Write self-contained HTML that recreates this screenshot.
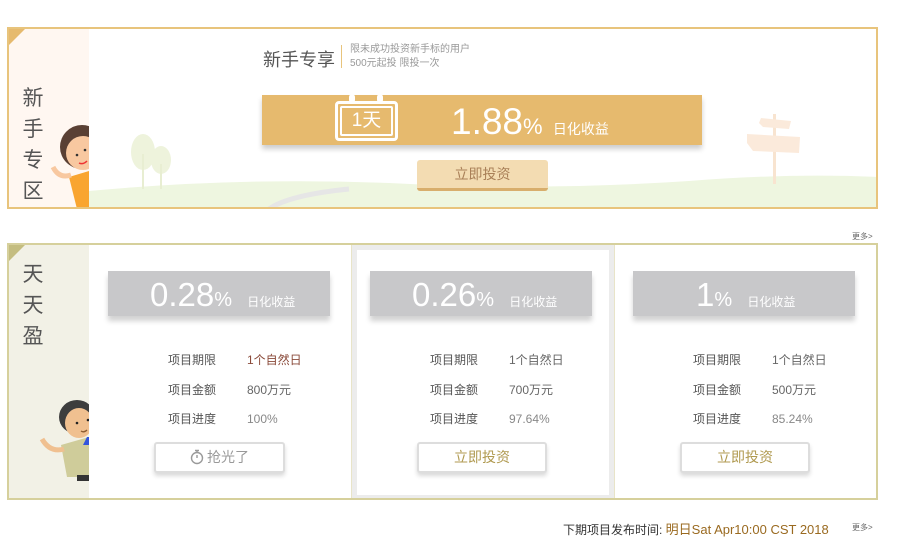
<!DOCTYPE html>
<html><head><meta charset="utf-8"><style>
*{margin:0;padding:0;box-sizing:border-box}
body{width:900px;height:535px;background:#fff;font-family:"Liberation Sans","Noto Sans CJK SC",sans-serif;position:relative;overflow:hidden}
.a{position:absolute}
.vt{font-size:21px;color:#555;line-height:31px;width:24px;text-align:center}
.bar{background:#c8c8ca;box-shadow:0 5px 5px rgba(0,0,0,.18);color:#fff}
.lbl{font-size:12px;color:#555}
.val{font-size:12px;color:#666}
.btn{border:2px solid #ddd;border-radius:3px;box-shadow:0 3px 4px rgba(0,0,0,.15);background:#fff;font-size:14px;text-align:center;line-height:27px}
</style></head><body>
<!-- top box -->
<div class="a" style="left:7px;top:27px;width:871px;height:182px;border:2px solid #e8c47c;overflow:hidden">
 <div class="a" style="left:0;top:0;width:80px;height:180px;background:#fff7f1"></div>
 <div class="a" style="left:0;top:0;width:0;height:0;border-top:16px solid #e6ba6e;border-right:16px solid transparent"></div>
 <div class="a vt" style="left:12px;top:54px">新<br>手<br>专<br>区</div>
 <!-- girl -->
 <svg class="a" style="left:40px;top:92px" width="40" height="88" viewBox="0 0 40 88">
  <ellipse cx="33" cy="26" rx="22" ry="22" fill="#5a4034"/>
  <ellipse cx="34" cy="32" rx="17" ry="17" fill="#f8c8a0"/>
  <circle cx="28" cy="34" r="1.3" fill="#333"/><circle cx="36" cy="29" r="1.3" fill="#333"/>
  <path d="M30 42q4 2 8-2" stroke="#e33" stroke-width="1.5" fill="none"/>
  <path d="M20 56l20-6v38h-12z" fill="#f9a530"/>
  <path d="M4 46q6 12 18 8" stroke="#f8c8a0" stroke-width="5" fill="none"/>
 </svg>
 <!-- ground -->
 <svg class="a" style="left:80px;top:140px" width="790" height="40" viewBox="0 0 790 40">
  <path d="M0 22Q150 8 300 14Q450 22 600 12Q700 4 790 8V40H0z" fill="#eef6e0"/>
  <path d="M180 40q20-14 80-20" stroke="#e6e6e6" stroke-width="5" fill="none"/>
 </svg>
 <svg class="a" style="left:120px;top:105px" width="50" height="55"><ellipse cx="14" cy="18" rx="12" ry="18" fill="#eef3dc"/><rect x="13" y="20" width="2" height="35" fill="#e8eed2"/><ellipse cx="32" cy="26" rx="10" ry="14" fill="#eef3dc"/><rect x="31" y="30" width="2" height="25" fill="#e8eed2"/></svg>
 <svg class="a" style="left:728px;top:85px" width="70" height="70"><rect x="36" y="0" width="3" height="70" fill="#f8e4d0"/><path d="M24 4l30 3-2 8-26-2-4-4z" fill="#fbeadb"/><path d="M10 20l53 3-1 16-46-2-6-8z" fill="#fbeadb"/></svg>
 <div class="a" style="left:254px;top:17px;font-size:18px;color:#555">新手专享</div>
 <div class="a" style="left:332px;top:16px;width:1px;height:23px;background:#e8c47c"></div>
 <div class="a" style="left:341px;top:14px;font-size:10px;color:#999;line-height:14px">限未成功投资新手标的用户<br>500元起投 限投一次</div>
 <div class="a" style="left:253px;top:66px;width:440px;height:50px;background:#e6ba6e;box-shadow:0 4px 5px rgba(0,0,0,.2)"></div>
 <div class="a" style="left:326px;top:72px;width:63px;height:40px;border:3px solid #fff;border-radius:4px"></div>
 <div class="a" style="left:340px;top:65px;width:6px;height:9px;background:#fff;border-radius:3px"></div>
 <div class="a" style="left:368px;top:65px;width:6px;height:9px;background:#fff;border-radius:3px"></div>
 <div class="a" style="left:331px;top:77px;width:53px;height:30px;border:2px solid #fff;border-radius:2px;color:#fff;font-size:19px;text-align:center;line-height:25px">1天</div>
 <div class="a" style="left:442px;top:73px;color:#fff;font-size:37px;line-height:40px">1.88<span style="font-size:22px">%</span> <span style="font-size:14px">日化收益</span></div>
 <div class="a" style="left:408px;top:131px;width:131px;height:31px;background:#f3dcb2;border-bottom:3px solid #d8ae6c;border-radius:3px;color:#a98058;font-size:14px;text-align:center;line-height:29px">立即投资</div>
</div>
<div class="a" style="left:852px;top:231px;font-size:8px;color:#666">更多&gt;</div>
<!-- bottom box -->
<div class="a" style="left:7px;top:243px;width:871px;height:257px;border:2px solid #d6d09c;overflow:hidden">
 <div class="a" style="left:0;top:0;width:80px;height:255px;background:#f2f1e6"></div>
 <div class="a" style="left:0;top:0;width:0;height:0;border-top:16px solid #c4bd80;border-right:16px solid transparent"></div>
 <div class="a vt" style="left:12px;top:14px">天<br>天<br>盈</div>
 <svg class="a" style="left:28px;top:150px" width="52" height="95" viewBox="0 0 52 95">
  <ellipse cx="40" cy="22" rx="18" ry="17" fill="#3d3d3d"/>
  <ellipse cx="42" cy="28" rx="14" ry="15" fill="#f0c090"/>
  <circle cx="40" cy="28" r="1.3" fill="#222"/><circle cx="51" cy="25" r="1.3" fill="#222"/>
  <path d="M44 36q3 2 6-1" stroke="#8a5a30" stroke-width="1.3" fill="none"/>
  <path d="M24 50l28-8v40h-22z" fill="#cfcc9a"/>
  <path d="M50 42h2v8h-6z" fill="#3355dd"/>
  <path d="M5 44q8 14 22 10" stroke="#f0c090" stroke-width="5" fill="none"/>
  <rect x="40" y="80" width="12" height="6" fill="#333"/>
 </svg>
 <div class="a" style="left:342px;top:0;width:1px;height:255px;background:#e8e4c8"></div>
 <div class="a" style="left:343px;top:0;width:262px;height:255px;border:5px solid #ececec"></div>
 <div class="a" style="left:605px;top:0;width:1px;height:255px;background:#e8e4c8"></div>
</div>
<!-- columns -->
<div class="a bar" style="left:108px;top:271px;width:222px;height:45px"><div style="position:absolute;left:42px;top:5px;font-size:33px;line-height:38px">0.28<span style="font-size:20px">%</span> <span style="font-size:12px;margin-left:6px">日化收益</span></div></div>
<div class="a bar" style="left:370px;top:271px;width:222px;height:45px"><div style="position:absolute;left:42px;top:5px;font-size:33px;line-height:38px">0.26<span style="font-size:20px">%</span> <span style="font-size:12px;margin-left:6px">日化收益</span></div></div>
<div class="a bar" style="left:633px;top:271px;width:222px;height:45px"><div style="position:absolute;left:63px;top:5px;font-size:33px;line-height:38px">1<span style="font-size:20px">%</span> <span style="font-size:12px;margin-left:6px">日化收益</span></div></div>

<div class="a lbl" style="left:168px;top:346px;line-height:29.5px">项目期限<br>项目金额<br>项目进度</div>
<div class="a val" style="left:247px;top:346px;line-height:29.5px"><span style="color:#8a4a3a">1个自然日</span><br>800万元<br><span style="color:#888">100%</span></div>
<div class="a lbl" style="left:430px;top:346px;line-height:29.5px">项目期限<br>项目金额<br>项目进度</div>
<div class="a val" style="left:509px;top:346px;line-height:29.5px">1个自然日<br>700万元<br><span style="color:#888">97.64%</span></div>
<div class="a lbl" style="left:693px;top:346px;line-height:29.5px">项目期限<br>项目金额<br>项目进度</div>
<div class="a val" style="left:772px;top:346px;line-height:29.5px">1个自然日<br>500万元<br><span style="color:#888">85.24%</span></div>

<div class="a btn" style="left:154px;top:442px;width:131px;height:31px;color:#999"><svg width="14" height="16" viewBox="0 0 14 16" style="vertical-align:-3px;margin-right:3px"><circle cx="7" cy="9" r="5.5" stroke="#999" stroke-width="1.4" fill="none"/><path d="M5 1.5h4M7 1.5v2M7 9V6" stroke="#999" stroke-width="1.4"/></svg>抢光了</div>
<div class="a btn" style="left:417px;top:442px;width:130px;height:31px;color:#b09a50">立即投资</div>
<div class="a btn" style="left:680px;top:442px;width:130px;height:31px;color:#b09a50">立即投资</div>

<div class="a" style="left:563px;top:519px;font-size:12px;color:#333;white-space:nowrap">下期项目发布时间: <span style="color:#9a6a20;font-size:13px">明日Sat Apr10:00 CST 2018</span></div>
<div class="a" style="left:852px;top:522px;font-size:8px;color:#666">更多&gt;</div>
</body></html>
